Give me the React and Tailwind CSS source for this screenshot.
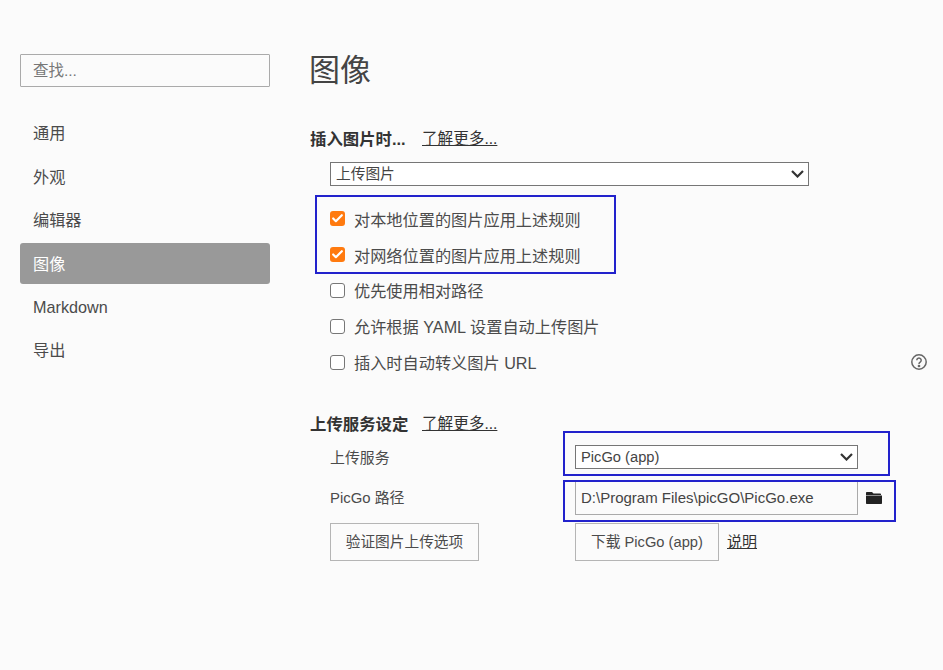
import React from 'react';
import { Check as CheckIcon } from 'lucide-react';

const FONT = "font-['Liberation_Sans','Noto_Sans_CJK_SC',sans-serif]";

function Check({ label, checked }) {
    return (
        <label className="flex items-center h-[35.8px] text-[16.2px] text-[#4b4b4b]">
            <span className={`relative -top-px w-[15px] h-[15px] shrink-0 flex items-center justify-center rounded-[3px] ${checked ? 'bg-[#ff7a0f]' : 'bg-white border-[1.5px] border-[#777]'}`}>
                {checked && <CheckIcon className="w-[13px] h-[13px] text-white" strokeWidth={4} />}
            </span>
            <span className="ml-[9px]">{label}</span>
        </label>
    );
}

function Heading({ title }) {
    return (
        <div className="flex items-center h-6">
            <span className="w-[112px] font-bold text-[16.4px] text-[#333]">{title}</span>
            <a className="text-[15.6px] text-[#333] underline">了解更多...</a>
        </div>
    );
}

function Select({ value, width }) {
    return (
        <div className={`relative h-6 ${width}`}>
            <select className="block w-full h-6 pl-[5px] appearance-none bg-white border border-[#767676] rounded-none text-[14.7px] text-[#444]">
                <option>{value}</option>
            </select>
            <svg className="absolute right-[5px] top-[8px] w-[13px] h-2 text-[#333] pointer-events-none" viewBox="0 0 13 8" fill="none" stroke="currentColor" strokeWidth="2.2">
                <path d="M1 1l5.5 5.5L12 1" />
            </svg>
        </div>
    );
}

export default function App() {
    const nav = ['通用', '外观', '编辑器', '图像', 'Markdown', '导出'];

    return (
        <div className={`relative w-[943px] h-[670px] overflow-hidden bg-[#fbfbfb] flex ${FONT}`}>
            {/* Sidebar */}
            <div className="w-[290px] shrink-0 pl-5 pr-5 pt-[54px]">
                <input
                    placeholder="查找..."
                    className="w-[250px] h-[33px] px-[12px] bg-[#fbfbfb] border border-[#aaa] rounded-[1px] text-[15.5px] placeholder:text-[#777] outline-none"
                />
                <div className="mt-[26px] flex flex-col">
                    {nav.map((item) => (
                        <div
                            key={item}
                            className={`h-[41px] mb-[2.4px] px-[13px] flex items-center rounded-[3px] text-[16.2px] ${item === '图像' ? 'bg-[#999] text-white' : 'text-[#4b4b4b]'}`}
                        >
                            {item}
                        </div>
                    ))}
                </div>
            </div>

            {/* Settings */}
            <div className="flex-1 pl-5 pt-[49px]">
                <h1 className="text-[31px] leading-[44px] text-[#444] -ml-px">图像</h1>

                <div className="mt-[34px]"><Heading title="插入图片时..." /></div>
                <div className="pl-5">
                    <div className="mt-[11px]"><Select value="上传图片" width="w-[479px]" /></div>
                    <div className="mt-4">
                        <Check label="对本地位置的图片应用上述规则" checked />
                        <Check label="对网络位置的图片应用上述规则" checked />
                        <Check label="优先使用相对路径" />
                        <Check label="允许根据 YAML 设置自动上传图片" />
                        <Check label="插入时自动转义图片 URL" />
                    </div>
                </div>

                <div className="mt-[31px]"><Heading title="上传服务设定" /></div>

                <div className="pl-5 mt-[9px] text-[14.9px] text-[#4b4b4b]">
                    <div className="flex items-center h-6">
                        <span className="w-[245px] pt-0.5">上传服务</span>
                        <Select value="PicGo (app)" width="w-[283px]" />
                    </div>
                    <div className="flex items-center h-[34px] mt-3">
                        <span className="w-[245px]">PicGo 路径</span>
                        <input
                            defaultValue="D:\Program Files\picGO\PicGo.exe"
                            className="w-[283px] h-[34px] px-[5px] bg-[#fbfbfb] border border-[#aaa] text-[15px] text-[#444] outline-none"
                        />
                        <svg className="ml-2 w-4 h-3 text-[#222]" viewBox="0 0 16 12" fill="currentColor">
                            <path d="M1 0h5l1.5 1.5H14c.6 0 1 .4 1 1V3H0V1c0-.6.4-1 1-1z" />
                            <path d="M0 3.6h16V11c0 .6-.4 1-1 1H1c-.6 0-1-.4-1-1z" />
                        </svg>
                    </div>
                    <div className="flex items-center mt-2">
                        <button className="w-[149px] h-[38px] bg-[#fbfbfb] border border-[#b5b5b5] text-[#4b4b4b] text-[14.7px]">验证图片上传选项</button>
                        <button className="ml-[96px] w-[144px] h-[38px] bg-[#fbfbfb] border border-[#b5b5b5] text-[#4b4b4b] text-[14.7px]">下载 PicGo (app)</button>
                        <a className="ml-2 text-[15px] text-[#333] underline">说明</a>
                    </div>
                </div>
            </div>

            {/* Help icon */}
            <svg className="absolute left-[911px] top-[354px] w-4 h-4 text-[#666]" viewBox="0 0 16 16" fill="none" stroke="currentColor" strokeWidth="1.5">
                <circle cx="8" cy="8" r="7.2" />
                <path d="M5.8 6.3a2.2 2.2 0 1 1 3.4 1.8c-.8.5-1.2.9-1.2 1.8" />
                <circle cx="8" cy="12" r=".6" fill="currentColor" />
            </svg>

            {/* Annotation boxes drawn over the screenshot */}
            <div className="absolute left-[315px] top-[195px] w-[301px] h-[79px] border-2 border-[#2222cc]" />
            <div className="absolute left-[563px] top-[431px] w-[327px] h-[45px] border-2 border-[#2222cc]" />
            <div className="absolute left-[563px] top-[480px] w-[333px] h-[42px] border-2 border-[#2222cc]" />
        </div>
    );
}
